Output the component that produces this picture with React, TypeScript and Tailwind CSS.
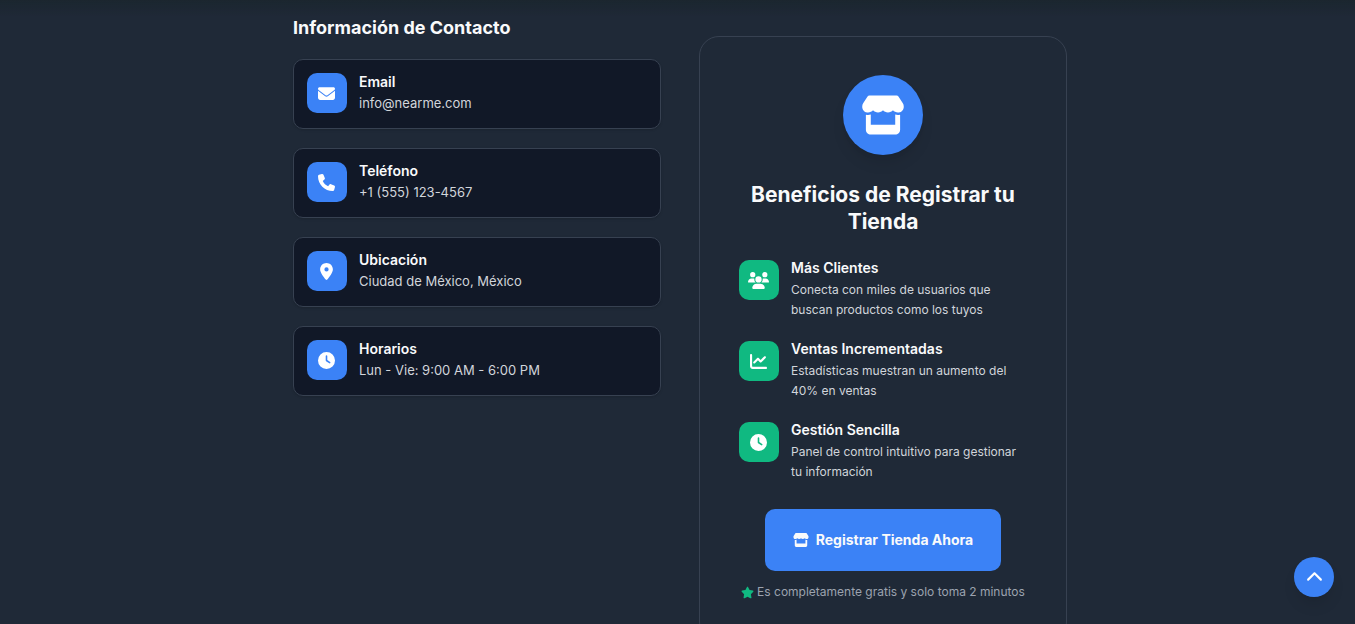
import type { ReactNode } from "react";
import {
  FaChartLine,
  FaChevronUp,
  FaClock,
  FaEnvelope,
  FaLocationDot,
  FaPhone,
  FaStar,
  FaStore,
  FaUsers,
} from "react-icons/fa6";

type Item = { title: string; text: string; icon: ReactNode };

const contacts: Item[] = [
  { title: "Email", text: "info@nearme.com", icon: <FaEnvelope size={17} /> },
  { title: "Teléfono", text: "+1 (555) 123-4567", icon: <FaPhone size={17} /> },
  { title: "Ubicación", text: "Ciudad de México, México", icon: <FaLocationDot size={17} /> },
  { title: "Horarios", text: "Lun - Vie: 9:00 AM - 6:00 PM", icon: <FaClock size={17} /> },
];

const benefits: Item[] = [
  {
    title: "Más Clientes",
    text: "Conecta con miles de usuarios que buscan productos como los tuyos",
    icon: <FaUsers size={21} />,
  },
  {
    title: "Ventas Incrementadas",
    text: "Estadísticas muestran un aumento del 40% en ventas",
    icon: <FaChartLine size={17} />,
  },
  {
    title: "Gestión Sencilla",
    text: "Panel de control intuitivo para gestionar tu información",
    icon: <FaClock size={17} />,
  },
];

function ContactCard({ title, text, icon }: Item) {
  return (
    <li className="flex items-start gap-3 rounded-[10px] border border-[#374151] bg-[#111827] p-[13px] pb-[14px] shadow-sm">
      <span className="flex size-10 shrink-0 items-center justify-center rounded-[10px] bg-[#3b82f6] pr-px text-white">
        {icon}
      </span>
      <div>
        <h3 className="text-sm leading-[18px] font-semibold text-[#f9fafb]">{title}</h3>
        <p className="mt-px text-[13px] leading-[22px] text-[#d1d5db]">{text}</p>
      </div>
    </li>
  );
}

function Benefit({ title, text, icon }: Item) {
  return (
    <li className="flex items-start gap-3">
      <span className="flex size-10 shrink-0 items-center justify-center rounded-[10px] bg-[#10b981] pr-px text-white">
        {icon}
      </span>
      <div>
        <h3 className="text-sm leading-4 font-semibold text-[#f9fafb]">{title}</h3>
        <p className="mt-1 text-xs leading-5 text-[#d1d5db]">{text}</p>
      </div>
    </li>
  );
}

export default function App() {
  return (
    <div className="min-h-screen bg-[#1f2937] font-['Inter',sans-serif]">
      <div className="pointer-events-none fixed inset-x-0 top-0 h-4 bg-linear-to-b from-[#1b262f] to-transparent" />
      <main className="mx-auto grid max-w-[779px] grid-cols-2 items-start gap-[38px] pl-[5px]">
        <section className="pt-4">
          <h2 className="text-lg leading-6 font-bold text-[#f9fafb]">Información de Contacto</h2>
          <ul className="mt-[19px] flex flex-col gap-[19px]">
            {contacts.map((item) => (
              <ContactCard key={item.title} {...item} />
            ))}
          </ul>
        </section>

        <section className="mt-9 rounded-[20px] border border-[#374151] px-[39px] pt-[38px] pb-10">
          <div className="mx-auto flex size-20 items-center justify-center rounded-full bg-[#3b82f6] text-white shadow-lg">
            <FaStore size={44} />
          </div>
          <h2 className="mt-[26px] text-center text-[21px] leading-[27px] font-bold text-[#f9fafb]">
            Beneficios de Registrar tu Tienda
          </h2>
          <ul className="mt-[25px] flex flex-col gap-[21px]">
            {benefits.map((item) => (
              <Benefit key={item.title} {...item} />
            ))}
          </ul>
          <div className="mt-[27px] flex flex-col items-center">
            <a
              href="#registrar"
              className="flex h-[62px] items-center gap-[7px] rounded-[10px] bg-[#3b82f6] px-7 text-sm font-bold text-[#f9fafb]"
            >
              <FaStore size={16} />
              Registrar Tienda Ahora
            </a>
            <p className="mt-3 flex items-center gap-[3px] text-xs leading-[18px] whitespace-nowrap text-[#9ca3af]">
              <FaStar size={13} className="text-[#10b981]" />
              Es completamente gratis y solo toma 2 minutos
            </p>
          </div>
        </section>
      </main>
      <button
        type="button"
        aria-label="Volver arriba"
        className="fixed right-[21px] bottom-[27px] flex size-10 items-center justify-center rounded-full bg-[#3b82f6] text-white shadow-lg"
      >
        <FaChevronUp size={17} />
      </button>
    </div>
  );
}
